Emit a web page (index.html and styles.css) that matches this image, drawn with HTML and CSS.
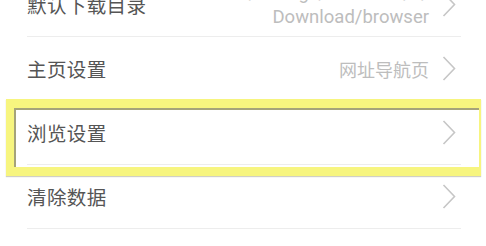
FILE: index.html
```html
<!DOCTYPE html>
<html>
<head>
<meta charset="utf-8">
<link rel="stylesheet" href="styles.css">
</head>
<body>
<div class="screen">
  <ul class="list">
    <li class="row">
      <span class="title">默认下载目录</span>
      <span class="value value-two">
        <span class="line">/storage/emulated/0/</span>
        <span class="line">Download/browser</span>
      </span>
      <svg class="chev" viewBox="0 0 14 25"><path d="M1.5 1 L12.5 12.5 L1.5 24"/></svg>
    </li>
    <li class="row">
      <span class="title">主页设置</span>
      <span class="value">网址导航页</span>
      <svg class="chev" viewBox="0 0 14 25"><path d="M1.5 1 L12.5 12.5 L1.5 24"/></svg>
    </li>
    <li class="row">
      <span class="title">浏览设置</span>
      <span class="value"></span>
      <svg class="chev" viewBox="0 0 14 25"><path d="M1.5 1 L12.5 12.5 L1.5 24"/></svg>
    </li>
    <li class="row">
      <span class="title">清除数据</span>
      <span class="value"></span>
      <svg class="chev" viewBox="0 0 14 25"><path d="M1.5 1 L12.5 12.5 L1.5 24"/></svg>
    </li>
  </ul>
  <div class="highlight"></div>
</div>
</body>
</html>
```
FILE: styles.css
```css
html, body {
  margin: 0;
  padding: 0;
  background: #fff;
}
.screen {
  position: relative;
  width: 486px;
  height: 246px;
  overflow: hidden;
  font-family: "Noto Sans CJK SC", "Noto Sans", sans-serif;
}
.list {
  list-style: none;
  margin: -27px 0 0 0;
  padding: 0 25px 0 27px;
}
.row {
  display: flex;
  align-items: center;
  height: 63px;
  border-bottom: 1px solid #ededed;
}
.title {
  flex: 1;
  font-size: 19.5px;
  color: #555;
  letter-spacing: 0.4px;
}
.value {
  font-size: 18px;
  color: #bdbdbd;
  margin-right: 13px;
  text-align: right;
}
.value-two {
  display: flex;
  flex-direction: column;
  font-family: "Roboto", "Noto Sans", sans-serif;
  font-size: 18.5px;
  line-height: 24px;
  margin-top: 0;
}
.chev {
  width: 14px;
  height: 25px;
  margin-right: 5px;
  fill: none;
  stroke: #c6c6c6;
  stroke-width: 1.6;
}
.highlight {
  position: absolute;
  left: 6px;
  top: 99px;
  width: 465px;
  height: 59px;
  border-style: solid;
  border-color: #f7f57f;
  border-width: 9px 2px 9px 8px;
  box-shadow: inset 2px 2px 0 #a5a37a, 0 1px 1px rgba(120,120,90,0.35);
}
```
